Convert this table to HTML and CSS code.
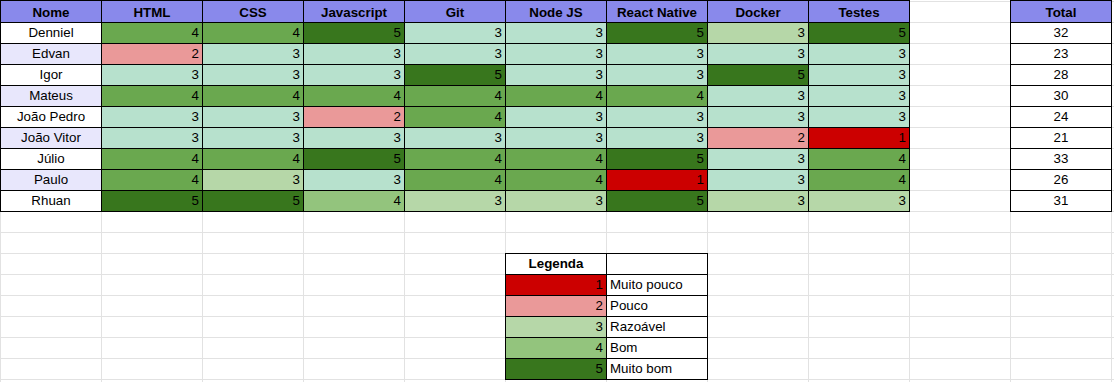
FILE: index.html
```html
<!DOCTYPE html>
<html lang="pt">
<head>
<meta charset="utf-8">
<title>Planilha de habilidades</title>
<link rel="stylesheet" href="styles.css">
</head>
<body>
<div class="sheet">
  <div class="tbl main">
    <div class="c h">Nome</div><div class="c h">HTML</div><div class="c h">CSS</div><div class="c h">Javascript</div><div class="c h">Git</div><div class="c h">Node JS</div><div class="c h">React Native</div><div class="c h">Docker</div><div class="c h">Testes</div>

    <div class="c ctr">Denniel</div><div class="c num v4">4</div><div class="c num v4">4</div><div class="c num v5">5</div><div class="c num v3">3</div><div class="c num v3">3</div><div class="c num v5">5</div><div class="c num v3p">3</div><div class="c num v5">5</div>

    <div class="c ctr alt">Edvan</div><div class="c num v2">2</div><div class="c num v3">3</div><div class="c num v3">3</div><div class="c num v3">3</div><div class="c num v3">3</div><div class="c num v3">3</div><div class="c num v3">3</div><div class="c num v3">3</div>

    <div class="c ctr">Igor</div><div class="c num v3">3</div><div class="c num v3">3</div><div class="c num v3">3</div><div class="c num v5">5</div><div class="c num v3">3</div><div class="c num v3">3</div><div class="c num v5">5</div><div class="c num v3">3</div>

    <div class="c ctr alt">Mateus</div><div class="c num v4">4</div><div class="c num v4">4</div><div class="c num v4">4</div><div class="c num v4">4</div><div class="c num v4">4</div><div class="c num v4">4</div><div class="c num v3">3</div><div class="c num v3">3</div>

    <div class="c ctr">João Pedro</div><div class="c num v3">3</div><div class="c num v3">3</div><div class="c num v2">2</div><div class="c num v4">4</div><div class="c num v3">3</div><div class="c num v3">3</div><div class="c num v3">3</div><div class="c num v3">3</div>

    <div class="c ctr alt">João Vitor</div><div class="c num v3">3</div><div class="c num v3">3</div><div class="c num v3">3</div><div class="c num v3">3</div><div class="c num v3">3</div><div class="c num v3">3</div><div class="c num v2">2</div><div class="c num v1">1</div>

    <div class="c ctr">Júlio</div><div class="c num v4">4</div><div class="c num v4">4</div><div class="c num v5">5</div><div class="c num v4">4</div><div class="c num v4">4</div><div class="c num v5">5</div><div class="c num v3">3</div><div class="c num v4">4</div>

    <div class="c ctr alt">Paulo</div><div class="c num v4">4</div><div class="c num v3p">3</div><div class="c num v3">3</div><div class="c num v4">4</div><div class="c num v4">4</div><div class="c num v1">1</div><div class="c num v3">3</div><div class="c num v4">4</div>

    <div class="c ctr">Rhuan</div><div class="c num v5">5</div><div class="c num v5">5</div><div class="c num v4l">4</div><div class="c num v3p">3</div><div class="c num v3p">3</div><div class="c num v5">5</div><div class="c num v3p">3</div><div class="c num v3p">3</div>
  </div>

  <div class="tbl total">
    <div class="c h">Total</div>
    <div class="c ctr">32</div>
    <div class="c ctr">23</div>
    <div class="c ctr">28</div>
    <div class="c ctr">30</div>
    <div class="c ctr">24</div>
    <div class="c ctr">21</div>
    <div class="c ctr">33</div>
    <div class="c ctr">26</div>
    <div class="c ctr">31</div>
  </div>

  <div class="tbl legend">
    <div class="c ctr bold">Legenda</div><div class="c"></div>
    <div class="c num v1">1</div><div class="c lbl">Muito pouco</div>
    <div class="c num v2">2</div><div class="c lbl">Pouco</div>
    <div class="c num v3p">3</div><div class="c lbl">Razoável</div>
    <div class="c num v4l">4</div><div class="c lbl">Bom</div>
    <div class="c num v5">5</div><div class="c lbl">Muito bom</div>
  </div>
</div>
</body>
</html>
```

FILE: styles.css
```css
html, body {
  margin: 0;
  padding: 0;
}

body {
  width: 1114px;
  height: 382px;
  overflow: hidden;
  background: #fff;
  font-family: "Liberation Sans", Arial, sans-serif;
  font-size: 13.33px;
  color: #000;
}

.sheet {
  box-sizing: border-box;
  width: 1114px;
  height: 382px;
  display: grid;
  grid-template-columns: repeat(11, 100px) 2px;
  grid-template-rows: 21px repeat(17, 20px) 2px;
  gap: 1px;
  padding: 1px 0 0 1px;
  background-color: #fff;
  background-image:
    linear-gradient(to right, #e2e2e2 1px, transparent 1px),
    linear-gradient(to bottom, #e2e2e2 1px, transparent 1px);
  background-size: 101px 21px;
  background-position: 0 0, 0 1px;
}

.tbl {
  display: grid;
  gap: 1px;
  background: #000;
  border: 1px solid #000;
  margin: -1px;
}

.main {
  grid-column: 1 / span 9;
  grid-row: 1 / span 10;
  grid-template-columns: repeat(9, 100px);
  grid-template-rows: 21px repeat(9, 20px);
}

.total {
  grid-column: 11 / span 1;
  grid-row: 1 / span 10;
  grid-template-columns: 100px;
  grid-template-rows: 21px repeat(9, 20px);
}

.legend {
  grid-column: 6 / span 2;
  grid-row: 13 / span 6;
  grid-template-columns: repeat(2, 100px);
  grid-template-rows: repeat(6, 20px);
}

.c {
  box-sizing: border-box;
  display: flex;
  align-items: flex-end;
  padding: 0 3px 2px;
  line-height: 16px;
  background: #fff;
  white-space: nowrap;
  overflow: hidden;
}

.h {
  background: #8989eb;
  font-weight: bold;
  justify-content: center;
  padding-bottom: 1px;
}

.bold { font-weight: bold; }
.ctr { justify-content: center; }
.num { justify-content: flex-end; }
.lbl { justify-content: flex-start; }
.alt { background: #e8e7fc; }

.v1 { background: #cc0000; }
.v2 { background: #ea9999; }
.v3 { background: #b7e1cd; }
.v3p { background: #b6d7a8; }
.v4 { background: #6aa84f; }
.v4l { background: #93c47d; }
.v5 { background: #38761d; }
```
